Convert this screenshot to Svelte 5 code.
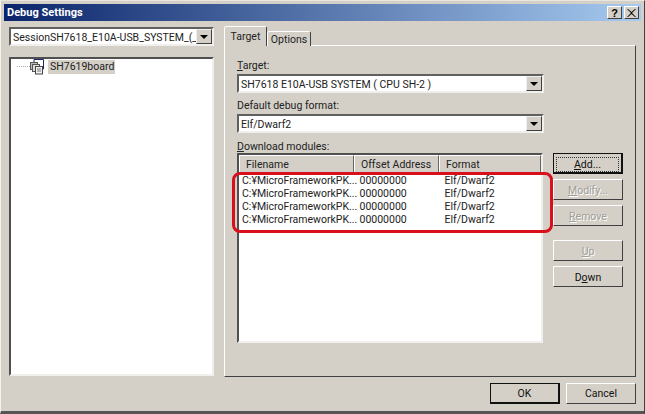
<script lang="ts">
	const modules = Array.from({ length: 4 }, () => ({
		file: 'C:¥MicroFrameworkPK...',
		offset: '00000000',
		format: 'Elf/Dwarf2'
	}));
</script>

<div class="dialog">
	<header class="titlebar">
		<span>Debug Settings</span>
		<div class="caption-buttons">
			<button class="caption">?</button>
			<button class="caption close" aria-label="Close">
				<svg width="9" height="8" viewBox="0 0 9 8"><path d="M1 0l3.5 3L8 0h1L5 4l4 4H8L4.5 5 1 8H0l4-4-4-4z" fill="#000" /></svg>
			</button>
		</div>
	</header>

	<div class="body">
		<aside class="left">
			<div class="combo session">
				<span class="value">SessionSH7618_E10A-USB_SYSTEM_(_</span>
				<span class="arrow"><i></i></span>
			</div>
			<div class="tree">
				<div class="tree-row">
					<span class="dots"></span>
					<svg class="node" width="15" height="16" viewBox="0 0 15 16">
						<path d="M4 3V0.5h9.5V10H11" fill="#fff" stroke="#1a2a6a" />
						<rect x="0.5" y="3.5" width="7" height="7" fill="#bbb" stroke="#555" />
						<rect x="2.5" y="5.5" width="7" height="7" fill="#ddd" stroke="#555" />
						<rect x="5.5" y="7.5" width="7" height="7.5" fill="#f2f2f2" stroke="#444" />
						<path d="M7 10h4M7 12h4" stroke="#777" />
					</svg>
					<span class="node-label">SH7619board</span>
				</div>
			</div>
		</aside>

		<section class="right">
			<div class="tabs">
				<div class="tab active">Target</div>
				<div class="tab">Options</div>
			</div>
			<div class="panel">
				<div class="form">
					<label class="first"><u>T</u>arget:</label>
					<div class="combo">
						<span class="value">SH7618 E10A-USB SYSTEM ( CPU SH-2 )</span>
						<span class="arrow"><i></i></span>
					</div>
					<label>Default debug format:</label>
					<div class="combo">
						<span class="value">Elf/Dwarf2</span>
						<span class="arrow"><i></i></span>
					</div>
					<label class="modules-label"><u>D</u>ownload modules:</label>
					<div class="modules">
						<div class="listview">
							<div class="list-head">
								<div>Filename</div>
								<div>Offset Address</div>
								<div>Format</div>
							</div>
							<div class="list-rows">
								{#each modules as m}
									<div class="list-row">
										<span>{m.file}</span>
										<span>{m.offset}</span>
										<span>{m.format}</span>
									</div>
								{/each}
							</div>
							<div class="highlight"></div>
						</div>
						<div class="side-buttons">
							<button class="btn default"><span class="focus"><u>A</u>dd...</span></button>
							<button class="btn disabled"><u>M</u>odify...</button>
							<button class="btn disabled"><u>R</u>emove</button>
							<button class="btn disabled gap"><u>U</u>p</button>
							<button class="btn">D<u>o</u>wn</button>
						</div>
					</div>
				</div>
			</div>
		</section>
	</div>

	<footer class="footer">
		<button class="btn default">OK</button>
		<button class="btn">Cancel</button>
	</footer>
</div>

<style>
	:global(body) {
		margin: 0;
		background: #d4d0c8;
	}

	* {
		box-sizing: border-box;
	}

	.dialog {
		width: 645px;
		height: 414px;
		padding: 3px 3px 0;
		display: flex;
		flex-direction: column;
		background: #d4d0c8;
		border-top: 1px solid #e8e6e0;
		border-left: 1px solid #f4f3f0;
		border-right: 1px solid #404040;
		border-bottom: 3px solid #555;
		font-family: Roboto, 'Liberation Sans', Arial, sans-serif;
		font-size: 10.5px;
		color: #222;
		overflow: hidden;
		position: relative;
	}

	.titlebar {
		height: 17px;
		flex: none;
		display: flex;
		align-items: center;
		justify-content: space-between;
		padding: 0 2px 0 3px;
		background: linear-gradient(90deg, #0a246a, #a6caf0);
		color: #fff;
		font-weight: bold;
		font-size: 11px;
	}

	.caption-buttons {
		display: flex;
		gap: 2px;
	}

	.caption {
		width: 15px;
		height: 13px;
		padding: 0;
		display: flex;
		align-items: center;
		justify-content: center;
		background: #d4d0c8;
		border: 1px solid;
		border-color: #fff #404040 #404040 #fff;
		font: bold 11px 'Liberation Sans', Arial, sans-serif;
		color: #000;
	}

	.body {
		flex: 1;
		display: flex;
		gap: 10px;
		padding: 6px 5px 0 5px;
		min-height: 0;
	}

	.left {
		width: 205px;
		display: flex;
		flex-direction: column;
		gap: 11px;
		flex: none;
	}

	.combo {
		height: 19px;
		flex: none;
		display: flex;
		align-items: center;
		background: #fff;
		border: 2px solid;
		border-color: #606060 #f0efec #f0efec #606060;
	}

	.combo .value {
		flex: 1;
		padding: 1px 0 0 2px;
		white-space: nowrap;
		overflow: hidden;
	}

	.arrow {
		width: 16px;
		height: 15px;
		flex: none;
		display: flex;
		align-items: center;
		justify-content: center;
		background: #d4d0c8;
		border: 1px solid;
		border-color: #eee #404040 #404040 #eee;
	}

	.arrow i {
		width: 0;
		height: 0;
		border-left: 4px solid transparent;
		border-right: 4px solid transparent;
		border-top: 4px solid #000;
	}

	.tree {
		flex: 1;
		margin-bottom: 1px;
		background: #fff;
		border: 2px solid;
		border-color: #505050 #f0efec #f0efec #505050;
		padding: 0 0 0 6px;
	}

	.tree-row {
		height: 15px;
		display: flex;
		align-items: center;
	}

	.dots {
		width: 13px;
		border-top: 1px dotted #aaa;
	}

	.node {
		margin-right: 3px;
		flex: none;
	}

	.node-label {
		background: #d4d0c8;
		height: 14px;
		line-height: 14px;
		padding: 0 2px;
		width: 67px;
		white-space: nowrap;
	}

	.right {
		flex: 1;
		display: flex;
		flex-direction: column;
		min-width: 0;
	}

	.tabs {
		height: 19px;
		flex: none;
		display: flex;
		align-items: flex-end;
		position: relative;
		z-index: 1;
		margin-bottom: -1px;
	}

	.tab {
		height: 15px;
		width: 44px;
		display: flex;
		align-items: center;
		justify-content: center;
		background: #d4d0c8;
		border: 1px solid;
		border-bottom: none;
		border-color: #fff #404040 transparent #fff;
		border-radius: 2px 2px 0 0;
	}

	.tab.active {
		height: 20px;
		width: 43px;
	}

	.panel {
		flex: 1;
		border: 1px solid;
		border-color: #fff #404040 #404040 #fff;
		padding: 0 0 0 12px;
	}

	.form {
		display: flex;
		flex-direction: column;
		width: 387px;
	}

	.form label {
		height: 14px;
		margin-top: 5px;
		margin-bottom: 2px;
		line-height: 16px;
	}

	.form label.first {
		margin-top: 12px;
	}

	.form .combo {
		width: 307px;
	}

	.form label.modules-label {
		margin-top: 6px;
		margin-bottom: 0;
	}

	.modules {
		display: flex;
		gap: 10px;
	}

	.listview {
		width: 306px;
		height: 190px;
		flex: none;
		background: #fff;
		border: 2px solid;
		border-color: #505050 #f0efec #f0efec #505050;
		position: relative;
	}

	.list-head {
		height: 17px;
		display: grid;
		grid-template-columns: 115px 85px 1fr;
		background: #d4d0c8;
	}

	.list-head div {
		padding: 1px 0 0 6px;
		line-height: 15px;
		border: 1px solid;
		border-color: #fff #666 #666 #fff;
	}

	.list-rows {
		padding-top: 2px;
	}

	.list-row {
		height: 13px;
		line-height: 13px;
		display: grid;
		grid-template-columns: 115.5px 85px 1fr;
		padding-left: 3px;
		white-space: nowrap;
	}

	.list-row span:nth-child(n + 2) {
		padding-left: 2px;
	}

	.highlight {
		position: absolute;
		left: -7px;
		top: 17px;
		width: 321px;
		height: 61px;
		border: 3px solid #d8101c;
		border-radius: 8px;
	}

	.side-buttons {
		display: flex;
		flex-direction: column;
		gap: 5px;
	}

	.btn {
		width: 70px;
		height: 21px;
		padding: 0;
		background: #d4d0c8;
		border: 1px solid;
		border-color: #fff #404040 #404040 #fff;
		font: 10.5px Roboto, 'Liberation Sans', Arial, sans-serif;
		color: #111;
	}

	.side-buttons .btn {
		padding-top: 1px;
	}

	.btn.default {
		border: 2px solid #111;
		border-top-width: 1px;
		border-left-width: 1px;
	}

	.focus {
		display: block;
		margin: 2px;
		line-height: 13px;
		border: 1px dotted #333;
	}

	.btn.disabled {
		color: #a09e98;
		text-shadow: 1px 1px 0 #fff;
	}

	.btn.gap {
		margin-top: 9px;
	}

	.footer {
		height: 34px;
		flex: none;
		display: flex;
		justify-content: flex-end;
		align-items: flex-start;
		gap: 6px;
		padding: 6px 5px 0 0;
	}
</style>
